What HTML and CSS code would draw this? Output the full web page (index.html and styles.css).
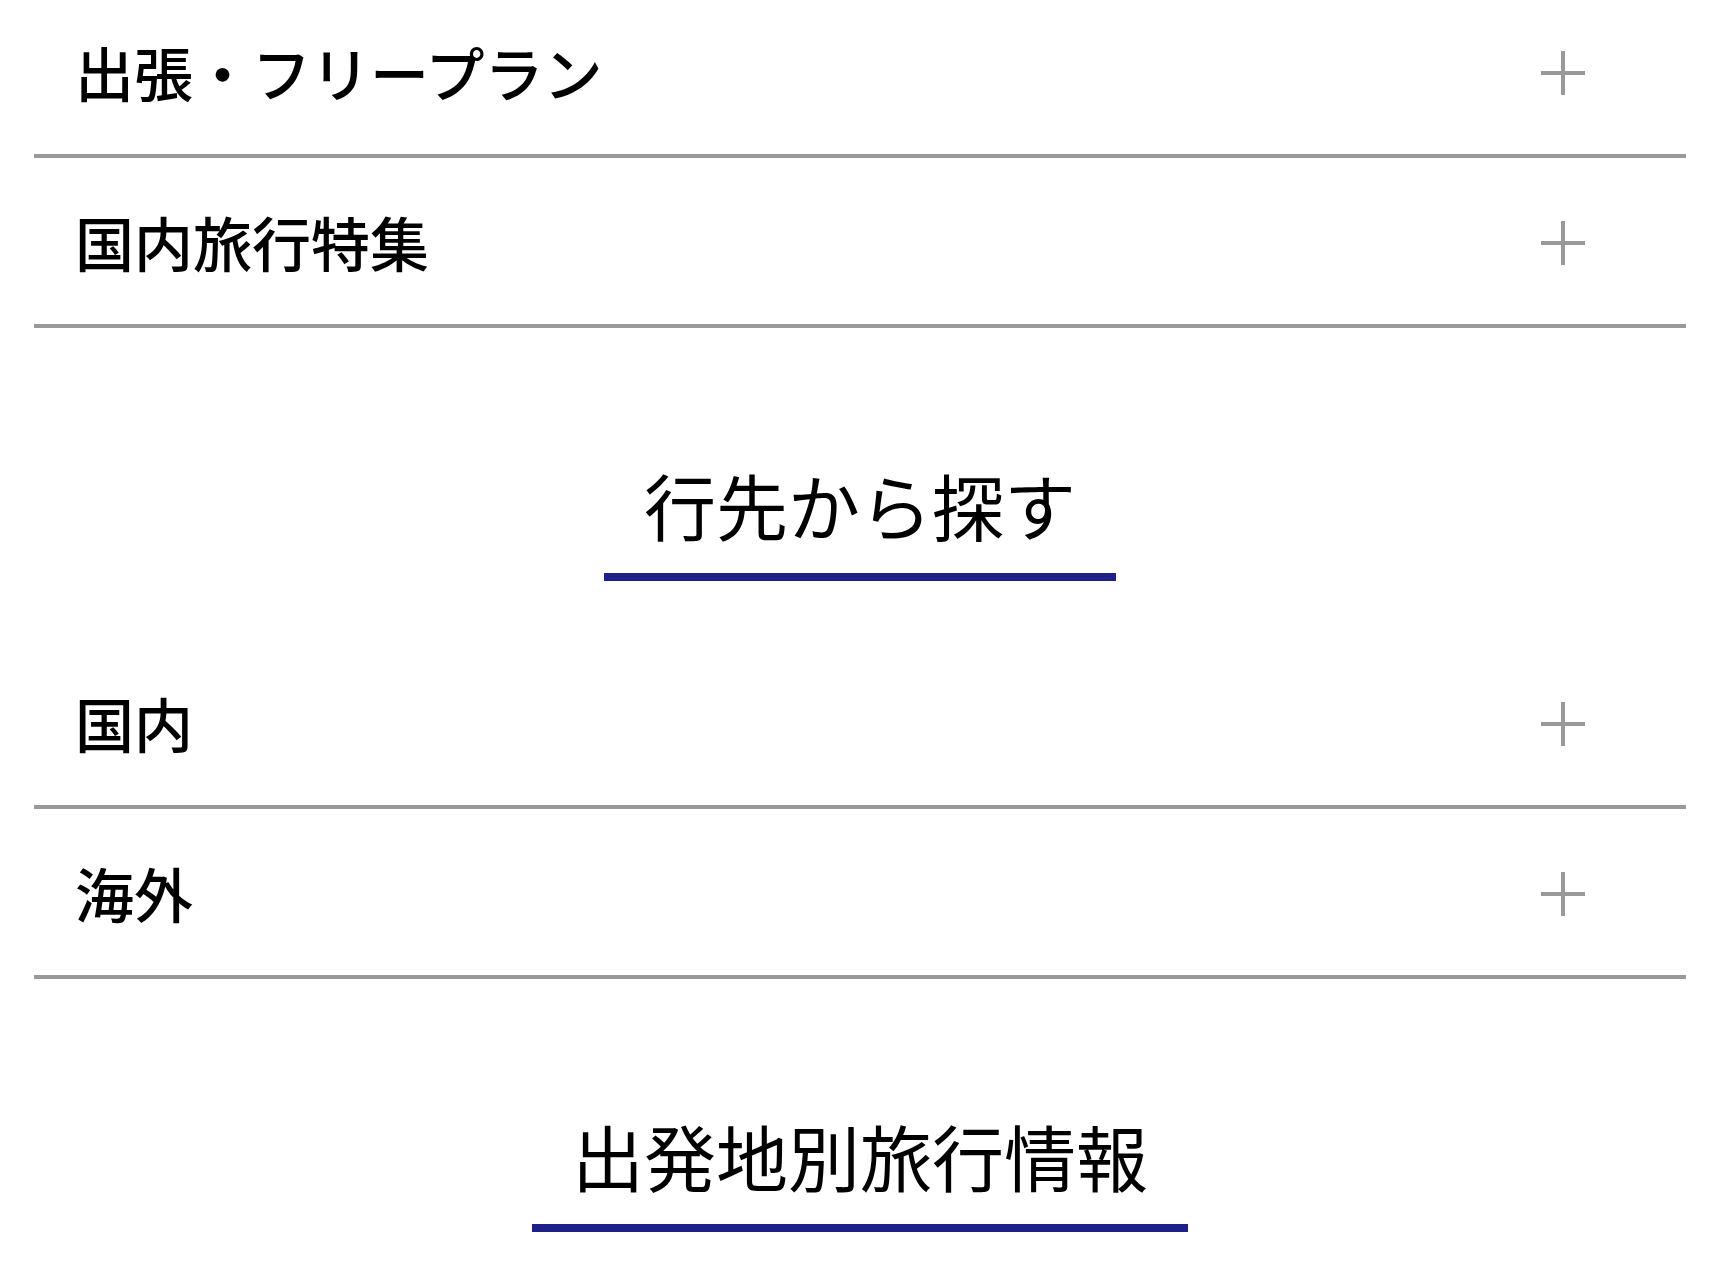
FILE: index.html
```html
<!DOCTYPE html>
<html lang="ja">
<head>
    <meta charset="utf-8">
    <title>旅行を探す</title>
    <link rel="stylesheet" href="styles.css">
</head>
<body>
    <div class="wrap">
        <ul class="acc-list first">
            <li class="acc-item"><span class="acc-label">出張・フリープラン</span><span class="plus"></span></li>
            <li class="acc-item"><span class="acc-label">国内旅行特集</span><span class="plus"></span></li>
        </ul>

        <div class="section-head">
            <h2>行先から探す</h2>
        </div>
        <ul class="acc-list">
            <li class="acc-item"><span class="acc-label">国内</span><span class="plus"></span></li>
            <li class="acc-item"><span class="acc-label">海外</span><span class="plus"></span></li>
        </ul>

        <div class="section-head">
            <h2>出発地別旅行情報</h2>
        </div>
    </div>
</body>
</html>
```

FILE: styles.css
```css
body {
    margin: 0;
    padding: 0;
    background-color: #fff;
    color: #000;
    font-family: "Noto Sans CJK JP", "Noto Sans", sans-serif;
}
.wrap {
    padding: 0 34px;
}
.acc-list {
    list-style-type: none;
    margin: 0;
    padding: 0;
}
.acc-list.first {
    margin-top: -12px;
}
.acc-item {
    display: flex;
    justify-content: space-between;
    align-items: center;
    height: 166px;
    padding: 0 101px 0 41px;
    border-bottom: 4px solid #999;
}
.acc-label {
    font-size: 59px;
    font-weight: 500;
    line-height: 1;
}
.plus {
    position: relative;
    width: 44px;
    height: 44px;
    margin-top: 4px;
}
.plus::before,
.plus::after {
    content: "";
    position: absolute;
    background-color: #999;
}
.plus::before {
    left: 0;
    top: 20px;
    width: 44px;
    height: 4px;
}
.plus::after {
    left: 20px;
    top: 0;
    width: 4px;
    height: 44px;
}
.section-head {
    text-align: center;
    margin: 126px 0 58px;
}
.section-head h2 {
    display: inline-block;
    margin: 0;
    padding: 0 40px 19px;
    font-size: 72px;
    font-weight: normal;
    line-height: 100px;
    border-bottom: 8px solid #1f2087;
}
```
